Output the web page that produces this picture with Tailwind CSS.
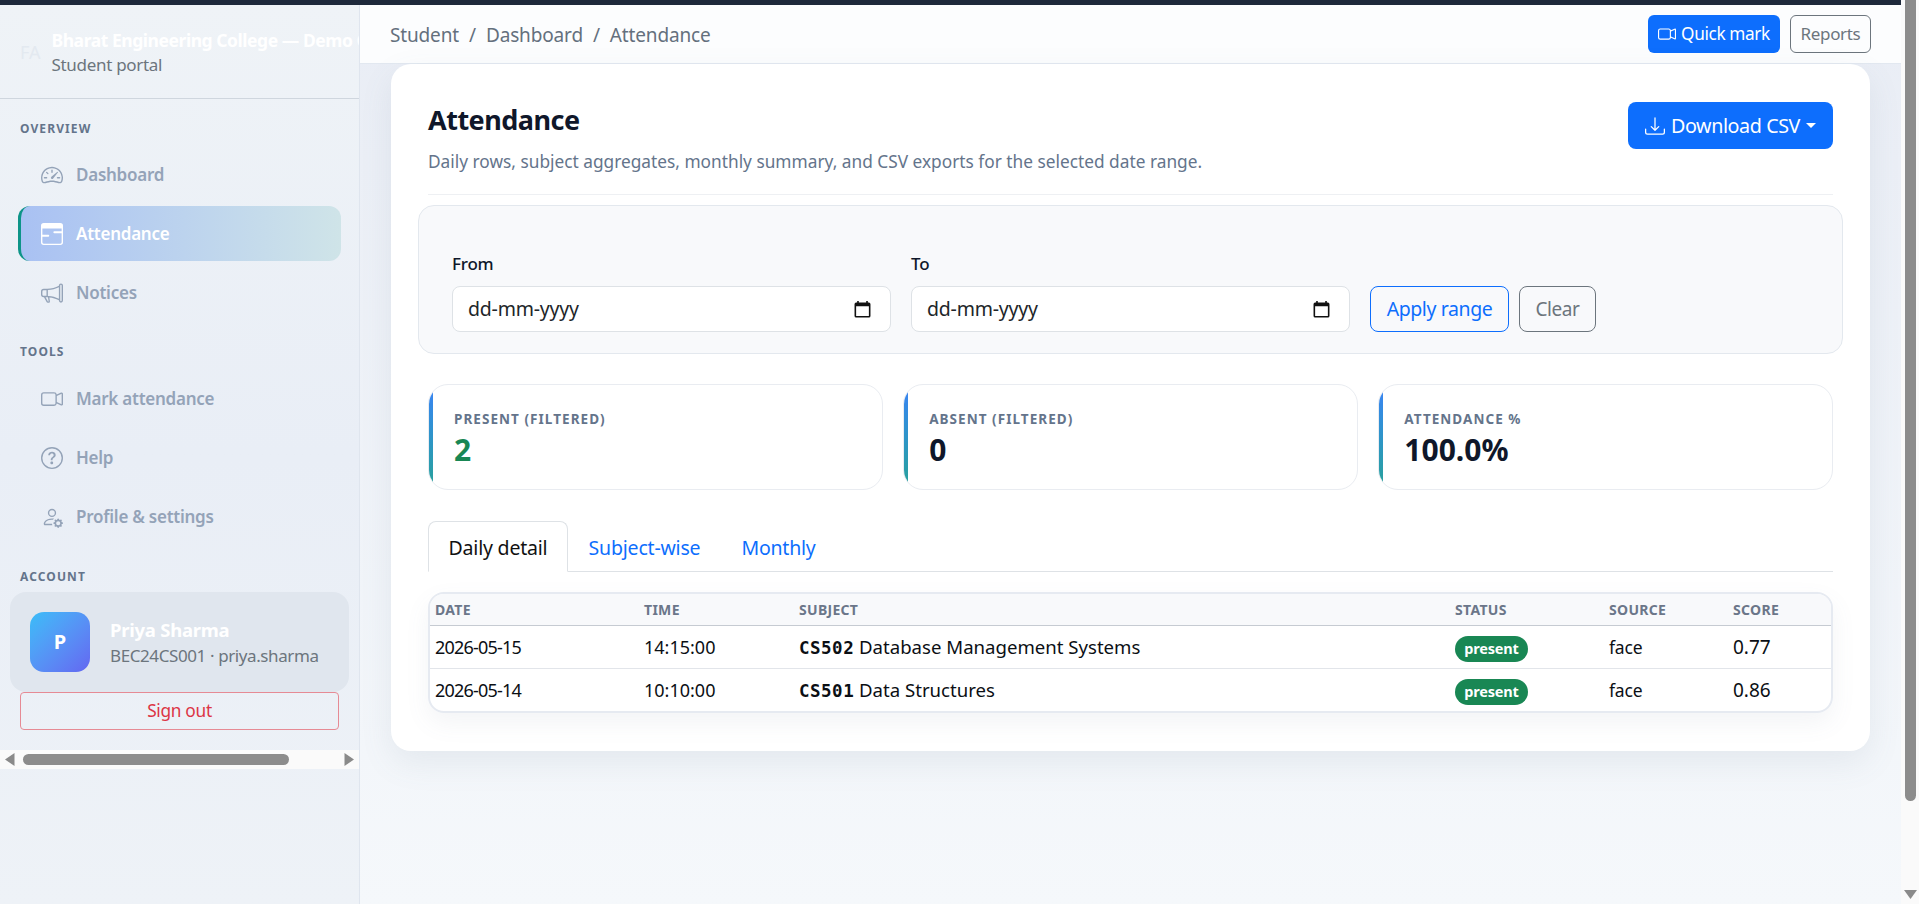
<!doctype html>
<html>
<head>
<meta charset="utf-8">
<script src="https://cdn.jsdelivr.net/npm/@tailwindcss/browser@4"></script>
</head>
<body class="m-0 h-[904px] w-[1919px] overflow-hidden bg-white font-['Noto_Sans','Open_Sans',sans-serif]">
<div class="flex h-[904px] w-[1919px]">
  <!-- page -->
  <div class="flex h-full w-[1901px] flex-col">
    <div class="h-[5px] shrink-0 bg-[#1e293b]"></div>
    <div class="flex min-h-0 flex-1 bg-gradient-to-b from-[#e9edf5] to-[#f5f8fb]">
      <!-- sidebar -->
      <aside class="flex h-full w-[360px] shrink-0 flex-col border-r border-[#dfe5ee] bg-gradient-to-b from-[#eff3f7] via-[#e9eef6] to-[#eef2f7]">
        <div class="flex h-[94px] shrink-0 items-center gap-[11px] overflow-hidden whitespace-nowrap border-b border-[#cfd6de] pl-[20px]">
          <span class="text-[18px] leading-none text-[#e3e9f0]">FA</span>
          <div>
            <div class="text-[17.5px] font-bold leading-[26px] tracking-[-0.45px] text-white">Bharat Engineering College — Demo College</div>
            <div class="text-[17px] leading-[24px] tracking-[-0.3px] text-[#6c757d]">Student portal</div>
          </div>
        </div>
        <div class="pl-[20px] pt-[22px] text-[12px] font-bold leading-[16px] tracking-[1.1px] text-[#64748b]">OVERVIEW</div>
        <nav class="flex flex-col gap-[4px] pl-[18px] pr-[18px] pt-[10px] text-[17px] font-semibold tracking-[-0.25px] text-[#94a3b8]">
          <a class="flex h-[55px] items-center gap-[13px] pl-[23px]"><svg class="size-[22px]" viewBox="0 0 16 16" fill="currentColor"><path d="M8 4a.5.5 0 0 1 .5.5V6a.5.5 0 0 1-1 0V4.5A.5.5 0 0 1 8 4M3.732 5.732a.5.5 0 0 1 .707 0l.915.914a.5.5 0 1 1-.708.708l-.914-.915a.5.5 0 0 1 0-.707M2 10a.5.5 0 0 1 .5-.5h1.586a.5.5 0 0 1 0 1H2.5A.5.5 0 0 1 2 10m9.5 0a.5.5 0 0 1 .5-.5h1.5a.5.5 0 0 1 0 1H12a.5.5 0 0 1-.5-.5m.754-4.246a.39.39 0 0 0-.527-.02L7.547 9.31a.91.91 0 1 0 1.302 1.258l3.434-4.297a.39.39 0 0 0-.029-.518z"/><path fill-rule="evenodd" d="M0 10a8 8 0 1 1 15.547 2.661c-.442 1.253-1.845 1.602-2.932 1.25C11.309 13.488 9.475 13 8 13c-1.474 0-3.31.488-4.615.911-1.087.352-2.49.003-2.932-1.25A8 8 0 0 1 0 10m8-7a7 7 0 0 0-6.603 9.329c.203.575.923.876 1.68.63C4.397 12.533 6.358 12 8 12s3.604.532 4.923.96c.757.245 1.477-.056 1.68-.631A7 7 0 0 0 8 3"/></svg>Dashboard</a>
          <a class="flex h-[55px] items-center gap-[13px] rounded-[12px] border-l-[3px] border-[#0d9488] bg-gradient-to-r from-[#a9c1f3] to-[#cfe4e8] pl-[20px] text-white"><svg class="size-[22px]" viewBox="0 0 16 16" fill="currentColor"><path fill-rule="evenodd" d="M2 0h12a2 2 0 0 1 2 2v12a2 2 0 0 1-2 2H2a2 2 0 0 1-2-2V2a2 2 0 0 1 2-2M1 4v10a1 1 0 0 0 1 1h12a1 1 0 0 0 1-1V4zM9 6.7a.7.7 0 0 1 .7-.7H15v1.4H9.700a.7.7 0 0 1-.7-.7M1 8.600h4.300a.7.7 0 0 1 0 1.400H1z"/></svg>Attendance</a>
          <a class="flex h-[55px] items-center gap-[13px] pl-[23px]"><svg class="size-[22px]" viewBox="0 0 16 16" fill="currentColor"><path d="M13 2.500a1.500 1.500 0 0 1 3 0v11a1.500 1.500 0 0 1-3 0v-.214c-2.162-1.241-4.490-1.843-6.912-2.083l.405 2.712A1 1 0 0 1 5.510 15.100h-.548a1 1 0 0 1-.916-.599l-1.850-3.490-.202-.003A2.014 2.014 0 0 1 0 9V7a2.020 2.020 0 0 1 1.992-2.013 75 75 0 0 0 2.483-.075c3.043-.154 6.148-.849 8.525-2.199zm1 0v11a.5.5 0 0 0 1 0v-11a.5.5 0 0 0-1 0m-1 1.350c-2.344 1.205-5.209 1.842-8 2.033v4.233q.27.015.537.036c2.568.189 5.093.744 7.463 1.993zm-9 6.215v-4.130a95 95 0 0 1-1.992.052A1.020 1.020 0 0 0 1 7v2c0 .55.448 1.002 1.006 1.009A61 61 0 0 1 4 10.065m-.657.975 1.609 3.037.01.024h.548l-.002-.014-.443-2.966a68 68 0 0 0-1.722-.082z"/></svg>Notices</a>
        </nav>
        <div class="pl-[20px] pt-[24px] text-[12px] font-bold leading-[16px] tracking-[1.1px] text-[#64748b]">TOOLS</div>
        <nav class="flex flex-col gap-[4px] pl-[18px] pr-[18px] pt-[11px] text-[17px] font-semibold tracking-[-0.25px] text-[#94a3b8]">
          <a class="flex h-[55px] items-center gap-[13px] pl-[23px]"><svg class="size-[22px]" viewBox="0 0 16 16" fill="currentColor"><path fill-rule="evenodd" d="M0 5a2 2 0 0 1 2-2h7.500a2 2 0 0 1 1.983 1.738l3.110-1.382A1 1 0 0 1 16 4.269v7.462a1 1 0 0 1-1.406.913l-3.111-1.382A2 2 0 0 1 9.500 13H2a2 2 0 0 1-2-2zm11.500 5.175 3.500 1.556V4.269l-3.500 1.556zM2 4a1 1 0 0 0-1 1v6a1 1 0 0 0 1 1h7.500a1 1 0 0 0 1-1V5a1 1 0 0 0-1-1z"/></svg>Mark attendance</a>
          <a class="flex h-[55px] items-center gap-[13px] pl-[23px]"><svg class="size-[22px]" viewBox="0 0 16 16" fill="currentColor"><path d="M8 15A7 7 0 1 1 8 1a7 7 0 0 1 0 14m0 1A8 8 0 1 0 8 0a8 8 0 0 0 0 16"/><path d="M5.255 5.786a.237.237 0 0 0 .241.247h.825c.138 0 .248-.113.266-.25.09-.656.54-1.134 1.342-1.134.686 0 1.314.343 1.314 1.168 0 .635-.374.927-.965 1.371-.673.489-1.206 1.06-1.168 1.987l.003.217a.25.25 0 0 0 .25.246h.811a.25.25 0 0 0 .25-.25v-.105c0-.718.273-.927 1.01-1.486.609-.463 1.244-.977 1.244-2.056 0-1.511-1.276-2.241-2.673-2.241-1.267 0-2.655.59-2.75 2.286m1.557 5.763c0 .533.425.927 1.01.927.609 0 1.028-.394 1.028-.927 0-.552-.42-.94-1.029-.94-.584 0-1.009.388-1.009.94"/></svg>Help</a>
          <a class="flex h-[55px] items-center gap-[13px] pl-[23px]"><svg class="size-[22px]" viewBox="0 0 16 16" fill="currentColor"><path d="M11 5a3 3 0 1 1-6 0 3 3 0 0 1 6 0M8 7a2 2 0 1 0 0-4 2 2 0 0 0 0 4m.256 7a4.500 4.500 0 0 1-.229-1.004H3c.001-.246.154-.986.832-1.664C4.484 10.680 5.711 10 8 10q.39 0 .74.025c.226-.341.496-.65.804-.918Q8.844 9.002 8 9c-5 0-6 3-6 4s1 1 1 1zm3.630-4.540c.18-.613 1.048-.613 1.229 0l.043.148a.64.64 0 0 0 .921.382l.136-.074c.561-.306 1.175.308.87.869l-.075.136a.64.64 0 0 0 .382.92l.149.045c.612.18.612 1.048 0 1.229l-.15.043a.64.64 0 0 0-.38.921l.074.136c.305.561-.309 1.175-.87.87l-.136-.075a.64.64 0 0 0-.92.382l-.045.149c-.18.612-1.048.612-1.229 0l-.043-.15a.64.64 0 0 0-.921-.38l-.136.074c-.561.305-1.175-.309-.87-.87l.075-.136a.64.64 0 0 0-.382-.92l-.148-.045c-.613-.18-.613-1.048 0-1.229l.148-.043a.64.64 0 0 0 .382-.921l-.074-.136c-.306-.561.308-1.175.869-.87l.136.075a.64.64 0 0 0 .92-.382zM14 12.500a1.500 1.500 0 1 0-3 0 1.500 1.500 0 0 0 3 0"/></svg>Profile &amp; settings</a>
        </nav>
        <div class="pl-[20px] pt-[25px] text-[12px] font-bold leading-[16px] tracking-[1.1px] text-[#64748b]">ACCOUNT</div>
        <div class="mx-[10px] mt-[7px] flex h-[100px] shrink-0 items-center gap-[20px] rounded-[16px] bg-[#e0e6ee] pl-[20px]">
          <div class="flex size-[60px] shrink-0 items-center justify-center rounded-[14px] bg-gradient-to-br from-[#38bdf8] to-[#6366f1] text-[20px] font-bold text-white">P</div>
          <div class="whitespace-nowrap">
            <div class="text-[18.5px] font-bold leading-[28px] tracking-[-0.25px] text-white">Priya Sharma</div>
            <div class="text-[17px] leading-[24px] tracking-[-0.4px] text-[#6c757d]">BEC24CS001 · priya.sharma</div>
          </div>
        </div>
        <div class="mx-[20px] flex h-[38px] shrink-0 items-center justify-center rounded-[4px] border border-[#e68a94] text-[17.3px] tracking-[-0.3px] text-[#dc3545]">Sign out</div>
        <div class="mt-[20px] flex h-[19px] shrink-0 items-center bg-[#fafafa]">
          <svg class="ml-[5px] h-[13px] w-[10px] shrink-0" viewBox="0 0 10 13" fill="#8a8a8a"><path d="M9.500 0v13L0 6.500z"/></svg>
          <div class="ml-[8px] h-[11px] w-[266px] rounded-full bg-[#8c8c8c]"></div>
          <svg class="ml-auto mr-[5px] h-[13px] w-[10px] shrink-0" viewBox="0 0 10 13" fill="#8a8a8a"><path d="M.5 0v13L10 6.500z"/></svg>
        </div>
      </aside>
      <!-- main -->
      <main class="flex min-w-0 flex-1 flex-col">
        <header class="flex h-[59px] shrink-0 items-center justify-between border-b border-[#e2e8f0] bg-[#fcfdfe] pl-[30px] pr-[30px]">
          <div class="flex items-center gap-[10px] pt-[3px] text-[19px] tracking-[-0.15px] text-[#64707d]"><span>Student</span><span>/</span><span>Dashboard</span><span>/</span><span>Attendance</span></div>
          <div class="flex items-center gap-[10px]">
            <div class="flex h-[38px] w-[132px] items-center justify-center gap-[5px] rounded-[6px] bg-[#0d6efd] text-[17.200px] tracking-[-0.35px] text-white"><svg class="size-[18px]" viewBox="0 0 16 16" fill="currentColor"><path fill-rule="evenodd" d="M0 5a2 2 0 0 1 2-2h7.500a2 2 0 0 1 1.983 1.738l3.110-1.382A1 1 0 0 1 16 4.269v7.462a1 1 0 0 1-1.406.913l-3.111-1.382A2 2 0 0 1 9.500 13H2a2 2 0 0 1-2-2zm11.500 5.175 3.500 1.556V4.269l-3.500 1.556zM2 4a1 1 0 0 0-1 1v6a1 1 0 0 0 1 1h7.500a1 1 0 0 0 1-1V5a1 1 0 0 0-1-1z"/></svg>Quick mark</div>
            <div class="flex h-[38px] w-[81px] items-center justify-center rounded-[6px] border border-[#6c757d] text-[17px] tracking-[-0.35px] text-[#6c757d]">Reports</div>
          </div>
        </header>
        <div class="pl-[31px] pr-[31px]">
          <section class="h-[687px] rounded-[20px] bg-white pl-[37px] pr-[37px] shadow-[0_12px_32px_rgba(100,116,139,0.10)]">
            <div class="flex h-[131px] items-start justify-between border-b border-[#eef0f3] pt-[38px]">
              <div>
                <h1 class="text-[27px] font-bold leading-[36px] tracking-[-0.5px] text-[#0f172a]">Attendance</h1>
                <p class="mt-[12px] text-[17.300px] leading-[24px] text-[#64748b]">Daily rows, subject aggregates, monthly summary, and CSV exports for the selected date range.</p>
              </div>
              <div class="flex h-[47px] w-[205px] items-center justify-center gap-[6px] rounded-[8px] bg-[#0d6efd] text-[19.700px] tracking-[-0.4px] text-white"><svg class="size-[20px]" viewBox="0 0 16 16" fill="currentColor"><path d="M.5 9.900a.5.5 0 0 1 .5.5v2.500a1 1 0 0 0 1 1h12a1 1 0 0 0 1-1v-2.500a.5.5 0 0 1 1 0v2.500a2 2 0 0 1-2 2H2a2 2 0 0 1-2-2v-2.500a.5.5 0 0 1 .5-.5"/><path d="M7.646 11.854a.5.5 0 0 0 .708 0l3-3a.5.5 0 0 0-.708-.708L8.500 10.293V1.500a.5.5 0 0 0-1 0v8.793L5.354 8.146a.5.5 0 1 0-.708.708z"/></svg>Download CSV<span class="h-0 w-0 border-x-[5.500px] border-t-[5.500px] border-x-transparent border-t-white"></span></div>
            </div>
            <!-- filter -->
            <div class="-mx-[10px] mt-[10px] flex h-[149px] items-end gap-[20px] rounded-[16px] border border-[#e3e8ee] bg-[#f8f9fb] pb-[21px] pl-[33px]">
              <div class="w-[439px]">
                <div class="mb-[10px] text-[17px] font-medium leading-[24px] tracking-[-0.2px] text-[#0f172a]">From</div>
                <div class="flex h-[46px] items-center justify-between rounded-[8px] border border-[#dee2e6] bg-white pl-[15px] pr-[19px] text-[19.500px] tracking-[-0.2px] text-[#212529]">dd-mm-yyyy<svg class="size-[17px]" viewBox="0 0 16 16" fill="#111"><path d="M3 0h1.500v1.500h7V0H13v1.500h1A1.500 1.500 0 0 1 15.500 3v11a1.500 1.500 0 0 1-1.500 1.500H2A1.500 1.500 0 0 1 .5 14V3A1.500 1.500 0 0 1 2 1.500h1zM2 5v9h12V5z" fill-rule="evenodd"/></svg></div>
              </div>
              <div class="w-[439px]">
                <div class="mb-[10px] text-[17px] font-medium leading-[24px] tracking-[-0.2px] text-[#0f172a]">To</div>
                <div class="flex h-[46px] items-center justify-between rounded-[8px] border border-[#dee2e6] bg-white pl-[15px] pr-[19px] text-[19.500px] tracking-[-0.2px] text-[#212529]">dd-mm-yyyy<svg class="size-[17px]" viewBox="0 0 16 16" fill="#111"><path d="M3 0h1.500v1.500h7V0H13v1.500h1A1.500 1.500 0 0 1 15.500 3v11a1.500 1.500 0 0 1-1.500 1.500H2A1.500 1.500 0 0 1 .5 14V3A1.500 1.500 0 0 1 2 1.500h1zM2 5v9h12V5z" fill-rule="evenodd"/></svg></div>
              </div>
              <div class="flex items-center gap-[10px]">
                <div class="flex h-[46px] w-[139px] items-center justify-center rounded-[8px] border border-[#0d6efd] text-[19.500px] tracking-[-0.4px] text-[#0d6efd]">Apply range</div>
                <div class="flex h-[46px] w-[77px] items-center justify-center rounded-[8px] border border-[#6c757d] text-[19px] tracking-[-0.4px] text-[#6c757d]">Clear</div>
              </div>
            </div>
            <!-- stats -->
            <div class="mt-[30px] grid grid-cols-3 gap-[20.500px]">
              <div class="relative h-[106px] overflow-hidden rounded-[20px] border border-[#e9ecf1] pl-[25px] pt-[26px]">
                <div class="absolute inset-y-0 left-0 w-[4px] bg-gradient-to-b from-[#3b82f6] to-[#2aa198]"></div>
                <div class="text-[13.500px] font-bold leading-[17px] tracking-[1.05px] text-[#64748b]">PRESENT (FILTERED)</div>
                <div class="mt-[3px] text-[30px] font-bold leading-[38px] text-[#198754]">2</div>
              </div>
              <div class="relative h-[106px] overflow-hidden rounded-[20px] border border-[#e9ecf1] pl-[25px] pt-[26px]">
                <div class="absolute inset-y-0 left-0 w-[4px] bg-gradient-to-b from-[#3b82f6] to-[#2aa198]"></div>
                <div class="text-[13.500px] font-bold leading-[17px] tracking-[1.05px] text-[#64748b]">ABSENT (FILTERED)</div>
                <div class="mt-[3px] text-[30px] font-bold leading-[38px] text-[#0f172a]">0</div>
              </div>
              <div class="relative h-[106px] overflow-hidden rounded-[20px] border border-[#e9ecf1] pl-[25px] pt-[26px]">
                <div class="absolute inset-y-0 left-0 w-[4px] bg-gradient-to-b from-[#3b82f6] to-[#2aa198]"></div>
                <div class="text-[13.500px] font-bold leading-[17px] tracking-[1.05px] text-[#64748b]">ATTENDANCE %</div>
                <div class="mt-[3px] text-[30px] font-bold leading-[38px] text-[#0f172a]">100.0%</div>
              </div>
            </div>
            <!-- tabs -->
            <div class="mt-[31px] flex h-[51px] items-stretch border-b border-[#dee2e6] text-[19.500px] tracking-[-0.2px]">
              <div class="-mb-px flex w-[140px] items-center justify-center rounded-t-[8px] border border-b-white border-[#dee2e6] bg-white pt-[3px] text-[#111]">Daily detail</div>
              <div class="flex w-[153px] items-center justify-center pt-[3px] text-[#0d6efd]">Subject-wise</div>
              <div class="flex w-[115px] items-center justify-center pt-[3px] text-[#0d6efd]">Monthly</div>
            </div>
            <!-- table -->
            <div class="mt-[20px] overflow-hidden rounded-[16px] border-2 border-[#e6eaf1] shadow-[0_10px_24px_rgba(100,116,139,0.08)]">
              <table class="w-full table-fixed border-collapse text-left">
                <thead>
                  <tr class="h-[31px] border-b border-[#c6cbd2] bg-[#f8f9fb] text-[14px] font-bold tracking-[0.3px] text-[#6b7689]">
                    <th class="w-[211px] pl-[5px]">DATE</th><th class="w-[155px] pl-[3px]">TIME</th><th class="w-[656px] pl-[3px]">SUBJECT</th><th class="w-[154px] pl-[3px]">STATUS</th><th class="w-[124px] pl-[3px]">SOURCE</th><th class="pl-[3px]">SCORE</th>
                  </tr>
                </thead>
                <tbody class="text-[18.600px] text-[#0b0f14]">
                  <tr class="h-[43px] border-b border-[#e2e5ea] [&>td]:pt-[2px]">
                    <td class="pl-[5px] text-[18px] tracking-[-0.8px]">2026-05-15</td><td class="pl-[3px] text-[18px]">14:15:00</td><td class="pl-[3px]"><span class="font-['DejaVu_Sans_Mono',monospace] text-[17.500px] font-semibold tracking-[0.5px]">CS502</span> Database Management Systems</td><td class="pl-[3px]"><span class="inline-flex h-[26px] w-[73px] items-center justify-center rounded-full bg-[#198754] text-[14.500px] font-bold tracking-[-0.2px] text-white">present</span></td><td class="pl-[3px] text-[17.500px] tracking-[-0.2px]">face</td><td class="pl-[3px] text-[19px]">0.77</td>
                  </tr>
                  <tr class="h-[43px] [&>td]:pt-[1px]">
                    <td class="pl-[5px] text-[18px] tracking-[-0.8px]">2026-05-14</td><td class="pl-[3px] text-[18px]">10:10:00</td><td class="pl-[3px]"><span class="font-['DejaVu_Sans_Mono',monospace] text-[17.500px] font-semibold tracking-[0.5px]">CS501</span> Data Structures</td><td class="pl-[3px]"><span class="inline-flex h-[26px] w-[73px] items-center justify-center rounded-full bg-[#198754] text-[14.500px] font-bold tracking-[-0.2px] text-white">present</span></td><td class="pl-[3px] text-[17.500px] tracking-[-0.2px]">face</td><td class="pl-[3px] text-[19px]">0.86</td>
                  </tr>
                </tbody>
              </table>
            </div>
          </section>
        </div>
      </main>
    </div>
  </div>
  <!-- page scrollbar -->
  <div class="relative h-full w-[18px] shrink-0 bg-[#fafafa]">
    <div class="ml-[4px] h-[801px] w-[11px] rounded-b-full bg-[#8c8c8c]"></div>
    <svg class="absolute bottom-[5px] left-[3px] h-[9px] w-[13px]" viewBox="0 0 13 9" fill="#8a8a8a"><path d="M0 0h13L6.500 9z"/></svg>
  </div>
</div>
</body>
</html>
